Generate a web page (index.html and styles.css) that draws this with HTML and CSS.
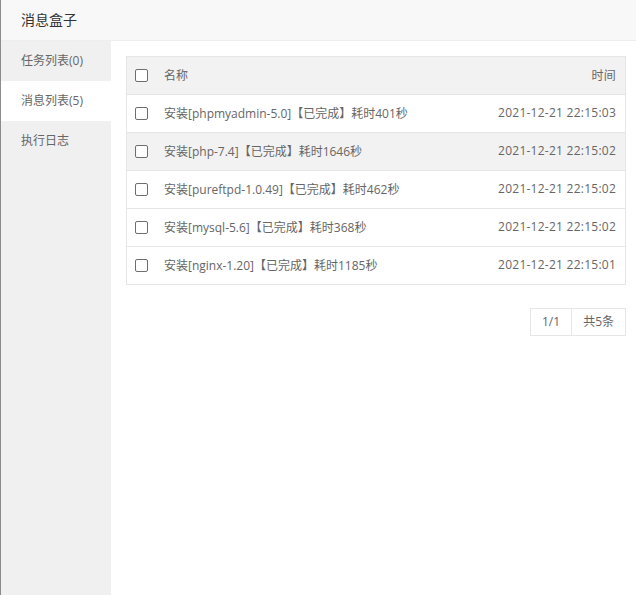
FILE: index.html
```html
<!DOCTYPE html>
<html>
<head>
<meta charset="utf-8">
<link rel="stylesheet" href="styles.css">
</head>
<body>
<div class="dialog">
  <div class="title">消息盒子</div>
  <div class="main">
    <div class="side">
      <div class="tab">任务列表(0)</div>
      <div class="tab active">消息列表(5)</div>
      <div class="tab">执行日志</div>
    </div>
    <div class="content">
      <div class="table">
        <div class="row head">
          <span class="cb"></span><span class="name">名称</span><span class="time">时间</span>
        </div>
        <div class="row">
          <span class="cb"></span><span class="name">安装[phpmyadmin-5.0]【已完成】耗时401秒</span><span class="time">2021-12-21 22:15:03</span>
        </div>
        <div class="row hover">
          <span class="cb"></span><span class="name">安装[php-7.4]【已完成】耗时1646秒</span><span class="time">2021-12-21 22:15:02</span>
        </div>
        <div class="row">
          <span class="cb"></span><span class="name">安装[pureftpd-1.0.49]【已完成】耗时462秒</span><span class="time">2021-12-21 22:15:02</span>
        </div>
        <div class="row">
          <span class="cb"></span><span class="name">安装[mysql-5.6]【已完成】耗时368秒</span><span class="time">2021-12-21 22:15:02</span>
        </div>
        <div class="row">
          <span class="cb"></span><span class="name">安装[nginx-1.20]【已完成】耗时1185秒</span><span class="time">2021-12-21 22:15:01</span>
        </div>
      </div>
      <div class="pager">
        <span class="pcell">1/1</span><span class="pcell">共5条</span>
      </div>
    </div>
  </div>
</div>
</body>
</html>
```
FILE: styles.css
```css
* { box-sizing: border-box; }
html, body { margin: 0; padding: 0; height: 100%; }
body {
  font-family: "Open Sans", "Noto Sans CJK SC", sans-serif;
  background: #fff;
  border-left: 1px solid #8c8c8c;
}
.dialog { height: 595px; display: flex; flex-direction: column; }
.title {
  height: 41px;
  padding-left: 20px;
  line-height: 40px;
  font-size: 14px;
  color: #333;
  background: #f8f8f8;
  border-bottom: 1px solid #eee;
}
.main { flex: 1; display: flex; }
.side { width: 110px; background: #f0f0f0; }
.tab {
  height: 40px;
  line-height: 40px;
  padding-left: 20px;
  font-size: 12px;
  color: #666;
}
.tab.active { background: #fff; }
.content { flex: 1; padding: 15px 10px 0 15px; }
.table { border: 1px solid #e6e6e6; border-bottom: none; }
.row {
  display: flex;
  align-items: center;
  height: 38px;
  border-bottom: 1px solid #e6e6e6;
  padding: 0 9px 0 8px;
  font-size: 12px;
  color: #666;
}
.row .name, .row .time { position: relative; top: -1px; }
.row.head { background: #f2f2f2; height: 38px; }
.row.hover { background: #f2f2f2; }
.cb {
  width: 13px; height: 13px;
  border: 1px solid #6e6e6e;
  border-radius: 2px;
  background: #fff;
  flex: none;
  margin-right: 16px;
}
.name { flex: 1; }
.time { text-align: right; letter-spacing: 0.25px; }
.pager { display: flex; justify-content: flex-end; margin-top: 23px; }
.pcell {
  height: 28px;
  line-height: 26px;
  padding: 0 11px;
  font-size: 12px;
  color: #666;
  border: 1px solid #e6e6e6;
}
.pcell + .pcell { border-left: none; }
```
